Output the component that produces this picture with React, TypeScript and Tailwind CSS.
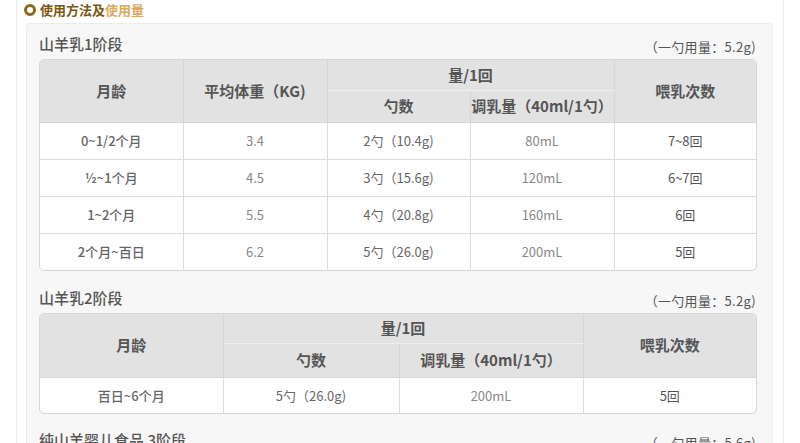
import React from "react";

const font = { fontFamily: '"Noto Sans CJK SC", "Noto Sans", sans-serif' };

type Cell = { t: string };

function Th({ children, className = "", rowSpan, colSpan }: { children: React.ReactNode; className?: string; rowSpan?: number; colSpan?: number }) {
  return (
    <th rowSpan={rowSpan} colSpan={colSpan} className={"bg-[#e2e2e2] text-[15px] font-bold text-[#555] p-0 text-center align-middle " + className}>
      {children}
    </th>
  );
}

function Title({ title, note }: { title: string; note: string }) {
  return (
    <div className="flex justify-between items-start h-[20px] pl-[12px] pr-[16px]">
      <div className="text-[15px] leading-[20px] text-[#555] font-medium">{title}</div>
      <div className="text-[13px] leading-[20px] pt-[3px] text-[#555] tracking-[0.3px]">{note}</div>
    </div>
  );
}

const rows1: Cell[][] = [
  [{ t: "0~1/2个月" }, { t: "3.4" }, { t: "2勺（10.4g)" }, { t: "80mL" }, { t: "7~8回" }],
  [{ t: "½~1个月" }, { t: "4.5" }, { t: "3勺（15.6g)" }, { t: "120mL" }, { t: "6~7回" }],
  [{ t: "1~2个月" }, { t: "5.5" }, { t: "4勺（20.8g)" }, { t: "160mL" }, { t: "6回" }],
  [{ t: "2个月~百日" }, { t: "6.2" }, { t: "5勺（26.0g)" }, { t: "200mL" }, { t: "5回" }],
];

const colStyles1 = [
  "text-[#666] font-medium",
  "text-[#888] font-normal",
  "text-[#666] font-normal",
  "text-[#888] font-normal",
  "text-[#555] font-normal",
];

export default function App() {
  return (
    <div className="w-[800px] h-[443px] overflow-hidden bg-white" style={font}>
      <div className="ml-[16px] w-[768px] h-[443px] border-l border-r border-[#ececec]">
        <div className="h-[23px] flex items-start pt-[2px] pl-[7px]">
          <span className="w-[12px] h-[12px] rounded-full border-[3px] border-[#8a6a1c] mt-[2px]" />
          <span className="ml-[4px] text-[13px] leading-[16px] font-bold text-[#7a5712]">使用方法及</span>
          <span className="text-[13px] leading-[16px] font-bold text-[#d9a963]">使用量</span>
        </div>
        <div className="ml-[9px] w-[747px] h-[430px] bg-[#f7f7f7] border border-[#ebebeb] rounded-[4px] pt-[10px]">
          <Title title="山羊乳1阶段" note="（一勺用量：5.2g)" />
          <div className="ml-[12px] mt-[5px] w-[718px] border border-[#d6d6d6] rounded-[5px] overflow-hidden bg-white">
            <table className="w-full table-fixed border-collapse">
              <colgroup>
                <col className="w-[143px]" />
                <col className="w-[144px]" />
                <col className="w-[143px]" />
                <col className="w-[144px]" />
                <col />
              </colgroup>
              <thead>
                <tr className="h-[30px]">
                  <Th rowSpan={2} className="border-r border-b border-[#d6d6d6]">月龄</Th>
                  <Th rowSpan={2} className="border-r border-b border-[#d6d6d6]">平均体重（KG)</Th>
                  <Th colSpan={2} className="border-r border-b border-r-[#d6d6d6] border-b-[#efefef]">量/1回</Th>
                  <Th rowSpan={2} className="border-b border-[#d6d6d6]">喂乳次数</Th>
                </tr>
                <tr className="h-[32px]">
                  <Th className="border-r border-b border-[#d6d6d6]">勺数</Th>
                  <Th className="border-r border-b border-[#d6d6d6]">调乳量（40ml/1勺）</Th>
                </tr>
              </thead>
              <tbody>
                {rows1.map((r, i) => (
                  <tr key={i} className="h-[37px]">
                    {r.map((c, j) => (
                      <td
                        key={j}
                        className={
                          "p-0 text-center text-[13px] " +
                          colStyles1[j] +
                          (j < 4 ? " border-r border-[#dcdcdc]" : "") +
                          (i < 3 ? " border-b border-[#dcdcdc]" : "")
                        }
                      >
                        {c.t}
                      </td>
                    ))}
                  </tr>
                ))}
              </tbody>
            </table>
          </div>

          <div className="mt-[17px]">
            <Title title="山羊乳2阶段" note="（一勺用量：5.2g)" />
          </div>
          <div className="ml-[12px] mt-[5px] w-[718px] border border-[#d6d6d6] rounded-[5px] overflow-hidden bg-white">
            <table className="w-full table-fixed border-collapse">
              <colgroup>
                <col className="w-[183px]" />
                <col className="w-[176px]" />
                <col className="w-[184px]" />
                <col />
              </colgroup>
              <thead>
                <tr className="h-[29px]">
                  <Th rowSpan={2} className="border-r border-b border-[#d6d6d6]">月龄</Th>
                  <Th colSpan={2} className="border-r border-b border-r-[#d6d6d6] border-b-[#efefef]">量/1回</Th>
                  <Th rowSpan={2} className="border-b border-[#d6d6d6]">喂乳次数</Th>
                </tr>
                <tr className="h-[34px]">
                  <Th className="border-r border-b border-[#d6d6d6]">勺数</Th>
                  <Th className="border-r border-b border-[#d6d6d6]">调乳量（40ml/1勺）</Th>
                </tr>
              </thead>
              <tbody>
                <tr className="h-[36px]">
                  <td className="p-0 text-center text-[13px] text-[#666] font-medium border-r border-[#dcdcdc]">百日~6个月</td>
                  <td className="p-0 text-center text-[13px] text-[#666] border-r border-[#dcdcdc]">5勺（26.0g)</td>
                  <td className="p-0 text-center text-[13px] text-[#888] border-r border-[#dcdcdc]">200mL</td>
                  <td className="p-0 text-center text-[13px] text-[#555]">5回</td>
                </tr>
              </tbody>
            </table>
          </div>

          <div className="mt-[16px]">
            <Title title="纯山羊婴儿食品 3阶段" note="（一勺用量：5.6g)" />
          </div>
        </div>
      </div>
    </div>
  );
}
